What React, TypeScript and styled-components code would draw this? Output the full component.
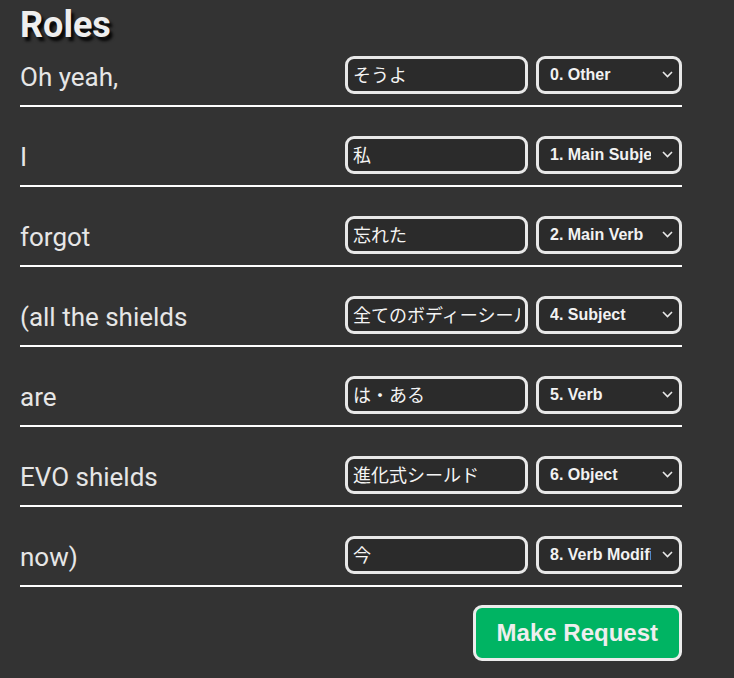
import React from "react";
import styled, { createGlobalStyle } from "styled-components";

const Global = createGlobalStyle`
  html, body { margin: 0; padding: 0; background: #333333; }
  body { font-family: Roboto, "Noto Sans", sans-serif; color: #eeeeee; }
  * { box-sizing: border-box; }
`;

const Page = styled.div`
  width: 662px;
  margin-left: 20px;
  padding-top: 3px;
  display: flex;
  flex-direction: column;
`;

const Title = styled.h1`
  margin: 0 0 9px;
  font-family: Roboto, sans-serif;
  font-weight: 700;
  font-size: 36px;
  line-height: 44px;
  color: #eeeeee;
  text-shadow: 3px 4px 3px rgba(0, 0, 0, 0.9);
`;

const List = styled.div`
  display: flex;
  flex-direction: column;
  gap: 29px;
`;

const Row = styled.div`
  display: flex;
  align-items: center;
  gap: 8px;
  padding-bottom: 11px;
  border-bottom: 2px solid #ffffff;
`;

const Label = styled.div`
  flex: 1;
  align-self: flex-end;
  padding-bottom: 2px;
  font-family: Roboto, sans-serif;
  font-size: 26px;
  color: #e6e6e6;
  white-space: nowrap;
`;

const TextInput = styled.input`
  width: 183px;
  height: 38px;
  border: 3px solid #e8e8e8;
  border-radius: 9px;
  background: #2b2b2b;
  color: #f4f4f4;
  padding: 0 5px 3px;
  font-family: "Noto Sans CJK JP", sans-serif;
  font-weight: 400;
  font-size: 18px;
  outline: none;
`;

const SelectWrap = styled.div`
  position: relative;
  width: 146px;
  height: 38px;
`;

const Select = styled.select`
  appearance: none;
  -webkit-appearance: none;
  width: 100%;
  height: 100%;
  border: 3px solid #e8e8e8;
  border-radius: 9px;
  background: #2b2b2b;
  color: #f2f2f2;
  padding: 0 28px 1px 11px;
  font-family: "Liberation Sans", Arial, sans-serif;
  font-weight: 700;
  font-size: 16px;
  outline: none;
`;

const Chevron = styled.svg`
  position: absolute;
  right: 9px;
  top: 15px;
  width: 11px;
  height: 7px;
  pointer-events: none;
`;

const Footer = styled.div`
  display: flex;
  justify-content: flex-end;
  margin-top: 18px;
`;

const Button = styled.button`
  background: #00b463;
  color: #eeeeee;
  border: 3px solid #ececec;
  border-radius: 9px;
  padding: 11px 21px;
  font-family: "Liberation Sans", Arial, sans-serif;
  font-weight: 700;
  font-size: 24px;
  line-height: 28px;
`;

const ROLES = [
  "0. Other",
  "1. Main Subject",
  "2. Main Verb",
  "3. Main Object",
  "4. Subject",
  "5. Verb",
  "6. Object",
  "7. Subject Modifier",
  "8. Verb Modifier",
];

const rows = [
  { en: "Oh yeah,", ja: "そうよ", role: "0. Other" },
  { en: "I", ja: "私", role: "1. Main Subject" },
  { en: "forgot", ja: "忘れた", role: "2. Main Verb" },
  { en: "(all the shields", ja: "全てのボディーシールド", role: "4. Subject" },
  { en: "are", ja: "は・ある", role: "5. Verb" },
  { en: "EVO shields", ja: "進化式シールド", role: "6. Object" },
  { en: "now)", ja: "今", role: "8. Verb Modifier" },
];

export default function App() {
  return (
    <>
      <Global />
      <Page>
        <Title>Roles</Title>
        <List>
          {rows.map((r, i) => (
            <Row key={i}>
              <Label>{r.en}</Label>
              <TextInput defaultValue={r.ja} />
              <SelectWrap>
                <Select defaultValue={r.role}>
                  {ROLES.map((o) => (
                    <option key={o} value={o}>
                      {o}
                    </option>
                  ))}
                </Select>
                <Chevron viewBox="0 0 11 7">
                  <path d="M1 1 L5.5 5.5 L10 1" fill="none" stroke="#e8e8e8" strokeWidth="1.6" />
                </Chevron>
              </SelectWrap>
            </Row>
          ))}
        </List>
        <Footer>
          <Button>Make Request</Button>
        </Footer>
      </Page>
    </>
  );
}
